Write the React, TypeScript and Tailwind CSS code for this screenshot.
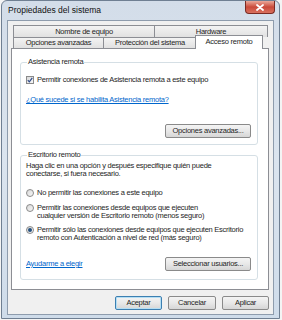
const font = { fontFamily: '"Liberation Sans", Arial, sans-serif' };

const txt = "text-[7.5px] leading-[8px] tracking-[-0.25px] text-[#1e1e1e] whitespace-nowrap";

const Btn = ({ label, w, primary }: { label: string; w: string; primary?: boolean }) => (
  <div
    className={`${w} h-[14px] rounded-[2px] border flex items-center justify-center ${txt} bg-gradient-to-b from-[#f4f4f4] via-[#e8e8e8] to-[#d6d6d6] ${
      primary ? "border-[#3c7fb1] shadow-[inset_0_0_0_1px_#b4def4]" : "border-[#8a8a8a]"
    }`}
  >
    {label}
  </div>
);

const Radio = ({ checked }: { checked?: boolean }) => (
  <span className="w-[8px] h-[8px] shrink-0 rounded-full border border-[#8a8a8a] bg-gradient-to-br from-[#d8d8d8] to-[#f8f8f8] flex items-center justify-center">
    {checked && <span className="w-[4px] h-[4px] rounded-full bg-[#24507e]" />}
  </span>
);

const Tab = ({ label, w, last }: { label: string; w: string; last?: boolean }) => (
  <div
    className={`${w} h-full flex items-center justify-center border-t border-l ${last ? "border-r" : ""} border-[#8c8e94] bg-gradient-to-b from-[#f3f3f3] to-[#e1e1e1] ${txt}`}
  >
    {label}
  </div>
);

const App = () => {
  return (
    <div className="w-[282px] h-[320px] bg-[#f4f4f4] overflow-hidden" style={font}>
      <div className="ml-[1px] w-[279px] h-[319px] rounded-t-[6px] border border-[#6f7f92] bg-gradient-to-b from-[#d3dde9] via-[#dbe4ee] to-[#cfdcea] px-[5px] pb-[3px] flex flex-col">
        {/* title bar */}
        <div className="h-[19px] flex items-start justify-between">
          <span className="mt-[5px] ml-[1px] text-[8.5px] leading-[9px] text-[#111]">Propiedades del sistema</span>
          <div className="w-[30px] h-[13px] rounded-b-[4px] border border-t-0 border-[#7a2a22] bg-gradient-to-b from-[#e9a89a] via-[#c9493a] to-[#d9705e] flex items-center justify-center mr-[-1px]">
            <svg width="8" height="7" viewBox="0 0 8 7">
              <path d="M1 1 L7 6 M7 1 L1 6" stroke="#fff" strokeWidth="1.8" strokeLinecap="round" />
            </svg>
          </div>
        </div>

        {/* client area */}
        <div className="flex-1 border border-[#8e9cad] bg-[#f0f0f0] pl-[3px] pt-[4px] flex flex-col">
          {/* tabs */}
          <div className="h-[23px] flex flex-col">
            <div className="h-[12px] ml-[2px] flex">
              <Tab label="Nombre de equipo" w="w-[141px]" />
              <Tab label="Hardware" w="w-[114px]" last />
            </div>
            <div className="h-[11px] ml-[2px] flex items-end">
              <Tab label="Opciones avanzadas" w="w-[90px]" />
              <Tab label="Protección del sistema" w="w-[93px]" />
              <div className={`relative z-10 -ml-[1px] mb-[-1px] w-[68px] h-[14px] border border-b-0 border-[#8c8e94] bg-white flex items-start pt-[2px] justify-center ${txt}`}>
                Acceso remoto
              </div>
            </div>
          </div>

          {/* panel */}
          <div className="w-[258px] h-[242px] border border-[#8c8e94] bg-white pl-[8px] pt-[9px]">
            <fieldset className="w-[238px] h-[87px] border border-[#d5dfe5] rounded-[3px] px-[5px]">
              <legend className={`ml-[1px] px-[1px] ${txt}`}>Asistencia remota</legend>
              <div className={`mt-[10px] flex items-center gap-[3px] ${txt}`}>
                <span className="w-[8px] h-[8px] border border-[#8a8a8a] bg-gradient-to-br from-[#d8d8d8] to-[#f8f8f8] flex items-center justify-center">
                  <svg width="6" height="6" viewBox="0 0 6 6">
                    <path d="M0.8 3.2 L2.3 4.8 L5.3 0.8" stroke="#2d4a8a" strokeWidth="1.2" fill="none" />
                  </svg>
                </span>
                Permitir conexiones de Asistencia remota a este equipo
              </div>
              <div className={`mt-[12px] ${txt} !text-[#0066cc] underline`}>
                ¿Qué sucede si se habilita Asistencia remota?
              </div>
              <div className="mt-[20px] flex justify-end mr-[1px]">
                <Btn label="Opciones avanzadas..." w="w-[86px]" />
              </div>
            </fieldset>

            <fieldset className="mt-[6px] w-[238px] h-[129px] border border-[#d5dfe5] rounded-[3px] px-[5px]">
              <legend className={`ml-[1px] px-[1px] ${txt}`}>Escritorio remoto</legend>
              <div className={`mt-[3px] ${txt}`}>
                Haga clic en una opción y después especifique quién puede
                <br />
                conectarse, si fuera necesario.
              </div>
              <div className={`mt-[11px] flex flex-col gap-[7px] ${txt}`}>
                <div className="flex items-start gap-[3px]">
                  <Radio />
                  <span>No permitir las conexiones a este equipo</span>
                </div>
                <div className="flex items-start gap-[3px]">
                  <Radio />
                  <span>
                    Permitir las conexiones desde equipos que ejecuten
                    <br />
                    cualquier versión de Escritorio remoto (menos seguro)
                  </span>
                </div>
                <div className="mt-[-1px] flex items-start gap-[3px]">
                  <Radio checked />
                  <span>
                    Permitir sólo las conexiones desde equipos que ejecuten Escritorio
                    <br />
                    remoto con Autenticación a nivel de red (más seguro)
                  </span>
                </div>
              </div>
              <div className="mt-[15px] flex items-center justify-between mr-[1px]">
                <span className={`${txt} !text-[#0066cc] underline`}>Ayudarme a elegir</span>
                <Btn label="Seleccionar usuarios..." w="w-[86px]" />
              </div>
            </fieldset>
          </div>

          {/* dialog buttons */}
          <div className="mt-[6px] mr-[4px] flex justify-end gap-[6px]">
            <Btn label="Aceptar" w="w-[47px]" primary />
            <Btn label="Cancelar" w="w-[48px]" />
            <Btn label="Aplicar" w="w-[47px]" />
          </div>
        </div>
      </div>
    </div>
  );
};

export default App;
